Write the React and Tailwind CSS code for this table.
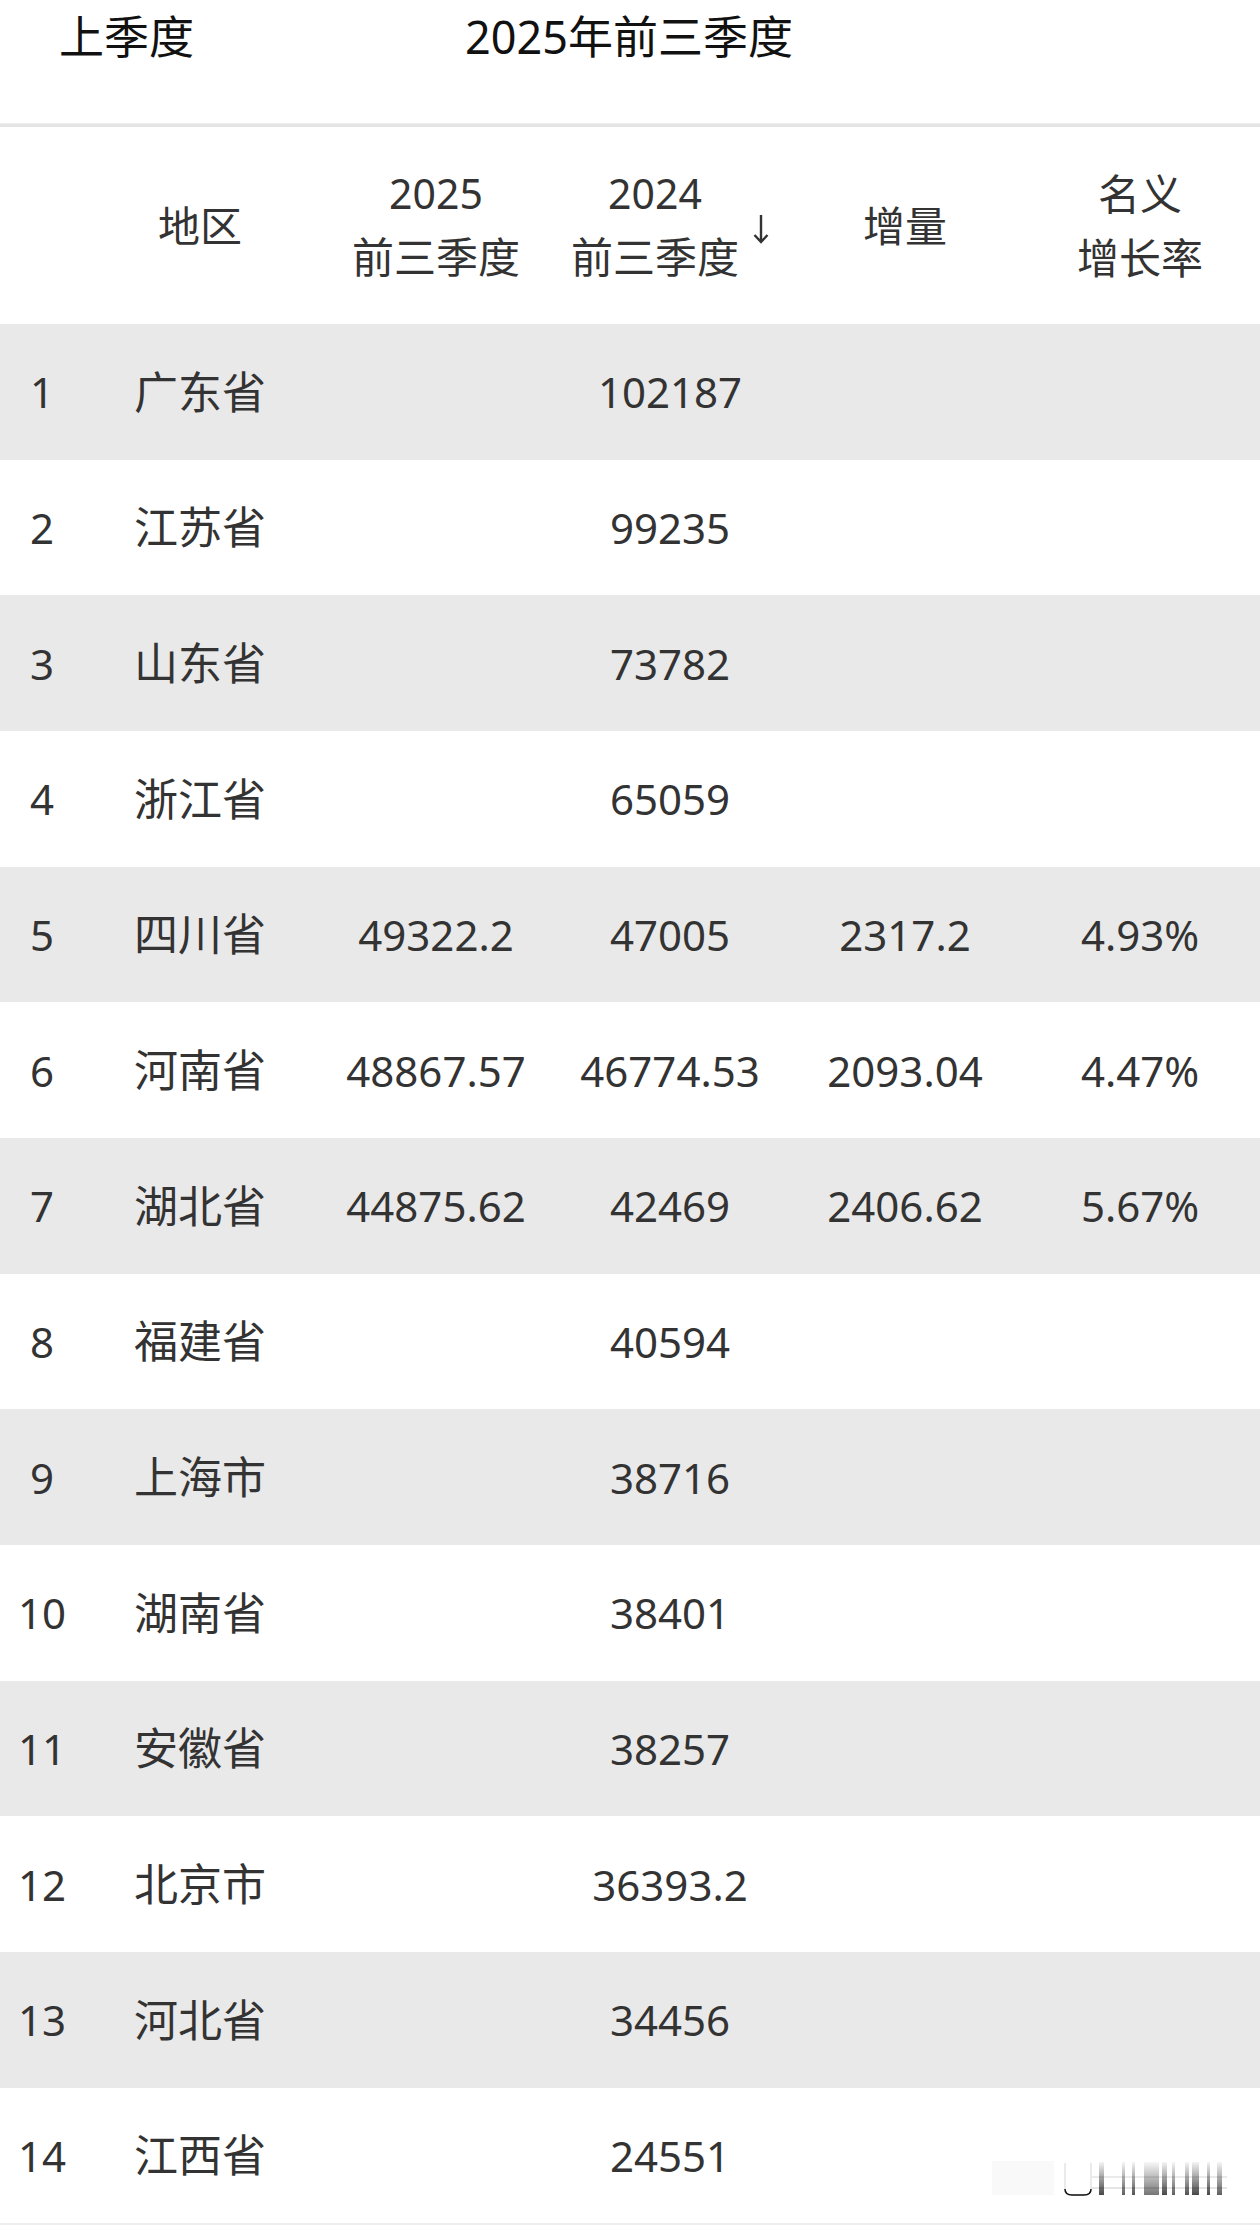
import React from 'react';

const rows = [
    ['1', '广东省', '', '102187', '', ''],
    ['2', '江苏省', '', '99235', '', ''],
    ['3', '山东省', '', '73782', '', ''],
    ['4', '浙江省', '', '65059', '', ''],
    ['5', '四川省', '49322.2', '47005', '2317.2', '4.93%'],
    ['6', '河南省', '48867.57', '46774.53', '2093.04', '4.47%'],
    ['7', '湖北省', '44875.62', '42469', '2406.62', '5.67%'],
    ['8', '福建省', '', '40594', '', ''],
    ['9', '上海市', '', '38716', '', ''],
    ['10', '湖南省', '', '38401', '', ''],
    ['11', '安徽省', '', '38257', '', ''],
    ['12', '北京市', '', '36393.2', '', ''],
    ['13', '河北省', '', '34456', '', ''],
    ['14', '江西省', '', '24551', '', ''],
];

const cols = 'grid grid-cols-[84px_232px_240px_228px_242px_228px]';

// faint watermark in the bottom corner
function Watermark() {
    const bars = [
        [107, 5, 0.8], [130, 3, 0.7], [140, 3, 0.75], [152, 15, 0.6],
        [170, 5, 0.8], [180, 3, 0.7], [193, 4, 0.75], [200, 7, 0.8],
        [215, 3, 0.8], [225, 5, 0.7],
    ];
    return (
        <svg width="240" height="44" viewBox="0 0 240 44" className="absolute right-[28px] bottom-[26px]">
            <defs>
                <linearGradient id="wm" x1="0" y1="0" x2="0" y2="1">
                    <stop offset="0" stopColor="#000" stopOpacity="0.05" />
                    <stop offset="1" stopColor="#000" stopOpacity="0.9" />
                </linearGradient>
            </defs>
            <rect x="0" y="4" width="62" height="34" fill="#000" opacity="0.025" />
            <path d="M73 6 V32 Q73 38 80 38 H92 Q99 38 99 32 V6" fill="none" stroke="#e4e4e4" strokeWidth="1.5" />
            <path d="M73 32 Q73 38 80 38 H92 Q99 38 99 32" fill="none" stroke="#111" strokeWidth="1.5" />
            {bars.map(([x, w, o], i) => (
                <rect key={i} x={x} y="5" width={w} height="33" fill="url(#wm)" opacity={o} />
            ))}
            <line x1="100" y1="20" x2="235" y2="20" stroke="#000" strokeOpacity="0.08" strokeWidth="2" />
            <line x1="100" y1="31" x2="235" y2="31" stroke="#000" strokeOpacity="0.1" strokeWidth="2" />
        </svg>
    );
}

export default function App() {
    return (
        <div className="relative w-[1260px] h-[2227px] bg-white overflow-hidden font-['Noto_Sans','Noto_Sans_CJK_SC',sans-serif]">
            {/* Title bar */}
            <div className="h-[123px] flex items-start pt-[7px] pl-[59px] text-[45px] text-[#111] leading-[60px]">
                <span className="w-[406px]">上季度</span>
                <span>2025年前三季度</span>
            </div>
            <div className="h-[4px] bg-[#e4e4e4] border-t border-[#eeeeee]" />

            {/* Header */}
            <div className={`${cols} h-[197px] text-[41px] text-[#333] leading-[64px] text-center items-center`}>
                <div />
                <div className="text-[42px]">地区</div>
                <div className="flex flex-col items-center pb-[2px]">
                    <span>2025</span>
                    <span className="text-[42px]">前三季度</span>
                </div>
                <div className="flex items-center justify-center gap-[14px]">
                    <div className="flex flex-col items-center pb-[2px]">
                        <span>2024</span>
                        <span className="text-[42px]">前三季度</span>
                    </div>
                    <svg width="16" height="30" viewBox="0 0 16 30" className="mt-[6px]">
                        <path d="M8 1 V28 M1.5 21 L8 28 L14.5 21" fill="none" stroke="#333" strokeWidth="2.4" />
                    </svg>
                </div>
                <div className="text-[42px]">增量</div>
                <div className="flex flex-col items-center text-[42px]">
                    <span>名义</span>
                    <span>增长率</span>
                </div>
            </div>

            {/* Rows */}
            {rows.map((r, i) => (
                <div
                    key={r[0]}
                    className={`${cols} h-[135.67px] items-center text-center text-[42px] text-[#333] ${
                        i % 2 === 0 ? 'bg-[#e9e9e9]' : 'bg-white'
                    }`}
                >
                    {r.map((c, j) => (
                        <div key={j} className={j === 1 ? 'text-[44px]' : ''}>
                            {c}
                        </div>
                    ))}
                </div>
            ))}
            <div className="h-[2px] bg-[#eeeeee]" />

            <Watermark />
        </div>
    );
}
